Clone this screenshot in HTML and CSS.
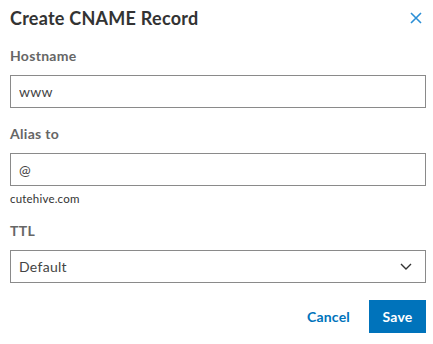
FILE: index.html
```html
<!doctype html>
<html lang="en">
  <head>
    <meta charset="UTF-8" />
    <meta name="viewport" content="width=device-width, initial-scale=1.0" />
    <title>Create CNAME Record</title>
    <link rel="stylesheet" href="styles.css">
  </head>
  <body>
    <div class="dialog">
      <div class="header">
        <h1>Create CNAME Record</h1>
        <button class="close" aria-label="Close">
          <svg width="12" height="12" viewBox="0 0 12 12">
            <path d="M1 1 L11 11 M11 1 L1 11" stroke="currentColor" stroke-width="1.6" fill="none" />
          </svg>
        </button>
      </div>

      <div class="field">
        <label class="label">Hostname</label>
        <input class="input" type="text" value="www" />
      </div>

      <div class="field">
        <label class="label">Alias to</label>
        <input class="input" type="text" value="@" />
        <div class="hint">cutehive.com</div>
      </div>

      <div class="field field-ttl">
        <label class="label">TTL</label>
        <div class="select">
          <span>Default</span>
          <svg width="12" height="7" viewBox="0 0 12 7">
            <path d="M1 1 L6 6 L11 1" stroke="#333" stroke-width="1.4" fill="none" />
          </svg>
        </div>
      </div>

      <div class="actions">
        <button class="button-link">Cancel</button>
        <button class="button">Save</button>
      </div>
    </div>
  </body>
</html>
```

FILE: styles.css
```css
* {
  margin: 0;
  padding: 0;
  box-sizing: border-box;
}

body {
  font-family: Lato, "Open Sans", sans-serif;
  background: white;
  color: #333;
}

.dialog {
  padding: 6px 7px 0 10px;
}

.header {
  display: flex;
  align-items: center;
  justify-content: space-between;
  height: 24px;
}

h1 {
  font-size: 18px;
  line-height: 24px;
  font-weight: 700;
  letter-spacing: 0.25px;
  color: #333;
}

.close {
  background: none;
  border: none;
  color: #2b8fd6;
  width: 24px;
  height: 24px;
  display: flex;
  align-items: center;
  justify-content: center;
  margin-right: -2px;
}

.field {
  margin-top: 16px;
}

.label {
  display: block;
  font-size: 14px;
  line-height: 20px;
  font-weight: 700;
  letter-spacing: 0.3px;
  color: #666;
  margin-bottom: 9px;
}

.input,
.select {
  display: block;
  width: 100%;
  height: 33px;
  border: 1px solid #8a8a8a;
  padding: 0 8px;
  font-family: inherit;
  font-size: 14px;
  letter-spacing: 0.3px;
  color: #444;
  background: white;
}

.select {
  display: flex;
  align-items: center;
  justify-content: space-between;
  padding-right: 13px;
}

.hint {
  font-size: 11.5px;
  line-height: 16px;
  letter-spacing: 0.2px;
  color: #333;
  margin-top: 5px;
}

.field-ttl {
  margin-top: 14px;
}

.actions {
  display: flex;
  justify-content: flex-end;
  align-items: center;
  gap: 8px;
  margin-top: 17px;
}

.button-link {
  background: none;
  border: none;
  font-family: inherit;
  font-size: 14px;
  font-weight: 700;
  letter-spacing: 0.2px;
  color: #0073bb;
  padding: 0 11px;
  height: 33px;
}

.button {
  background: #0073bb;
  color: white;
  border: none;
  font-family: inherit;
  font-size: 14px;
  font-weight: 700;
  letter-spacing: 0.2px;
  height: 33px;
  width: 57px;
}
```
